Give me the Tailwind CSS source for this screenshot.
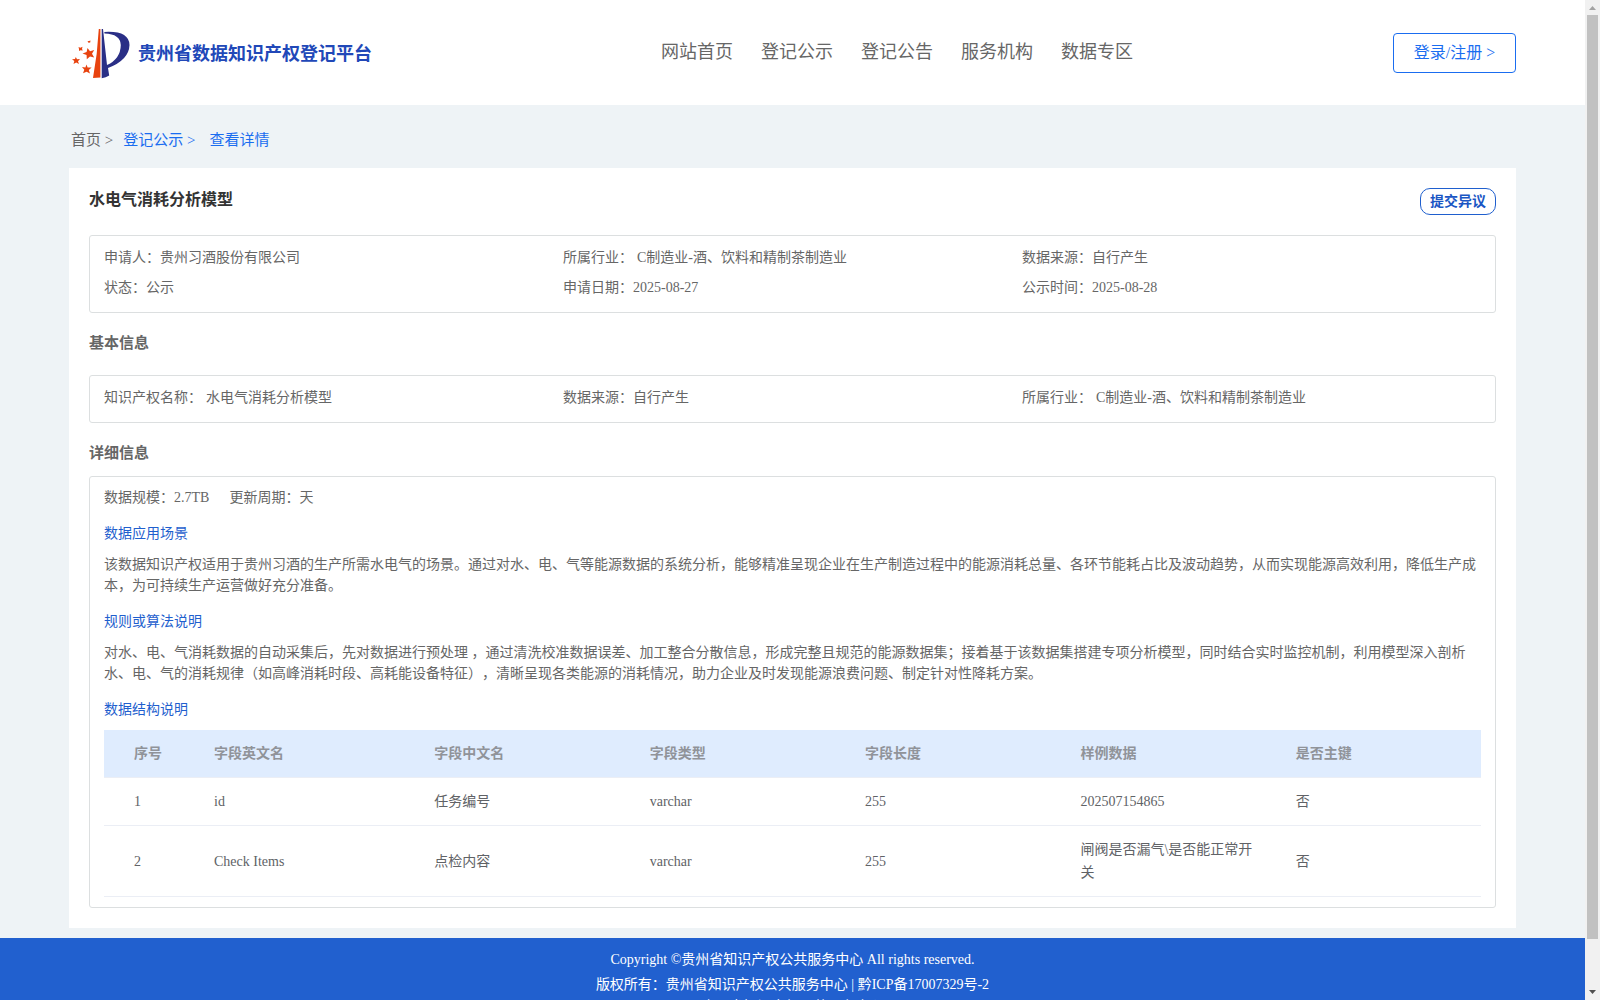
<!DOCTYPE html>
<html lang="zh-CN">
<head>
  <meta charset="UTF-8" />
  <meta name="viewport" content="width=device-width, initial-scale=1.0" />
  <title>贵州省数据知识产权登记平台</title>
  <script src="https://cdn.jsdelivr.net/npm/@tailwindcss/browser@4"></script>
  <style>
    body {
      font-family: "Liberation Serif", "Noto Sans CJK SC", serif;
      text-spacing-trim: space-all;
    }
  </style>
</head>
<body class="flex h-screen overflow-hidden bg-[#eef3f6] text-sm text-[#666]">
  <div class="flex-1 min-w-0 h-full overflow-hidden">
    <!-- Header -->
    <header class="bg-white h-[105px] px-[69px] flex items-center justify-between">
      <a href="#" class="w-[332px] flex items-center gap-2 pl-[3px] pt-[2px]">
        <svg class="w-[58px] h-[50px] shrink-0" viewBox="0 0 58 50" aria-hidden="true">
          <path fill="#e8430f" d="M26.800 0 L28.400 0 L28.400 48.500 Q24.500 48.500 21 49 Q25.500 25 26.800 0Z" />
          <path fill="#2a2f86" d="M29.700 0 L31 0 L35 36 Q48.500 30 48.800 16 Q48.500 5 32.500 4.500 L32.300 3 Q57 1.500 57.500 16 Q57 31 36 39 L37.200 46.500 Q34 48.500 29.700 49.300Z" />
          <g fill="#e8430f">
            <path d="M15.500 19 L18 22.300 L22.200 21 L20 24.700 L22.200 28.400 L18 27.400 L14.800 30.300 L14.600 26 L10.500 24.600 L14.600 22.900Z" />
            <path d="M3.800 28 L5 30.300 L8 30 L6 32.200 L7 35 L4.200 33.600 L1.500 35 L2.300 32 L0 30.200 L3 30Z" />
            <path d="M14.500 35.500 L15.600 38.600 L19.600 38.600 L16.800 41 L18 44.500 L14.600 42.800 L11 44.200 L12.300 40.800 L10 38 L13.400 38.400Z" />
            <path d="M6.500 18 L8.400 18.800 L10.500 17.800 L10 20 L10.800 21.500 L8.500 21.200 L7 22 L7 20Z" />
            <path d="M15.500 12.200 L17 12 L18.500 11.600 L18.200 13.400 L16.500 13.800Z" />
          </g>
        </svg>
        <span class="text-lg leading-6 font-bold text-[#2148b8] whitespace-nowrap">贵州省数据知识产权登记平台</span>
      </a>
      <nav class="flex gap-7 pb-[2px] text-lg leading-6 whitespace-nowrap">
        <a href="#">网站首页</a>
        <a href="#">登记公示</a>
        <a href="#">登记公告</a>
        <a href="#">服务机构</a>
        <a href="#">数据专区</a>
      </nav>
      <button type="button" class="w-[123px] h-10 border border-[#1a6df0] rounded text-base leading-6 text-[#1a6df0]">登录/注册 &gt;</button>
    </header>

    <main class="px-[69px]">
      <!-- Breadcrumb -->
      <nav class="h-[63px] pl-[2px] pt-[6px] flex items-center text-[15px] leading-6 text-[#1a6df0]">
        <a href="#" class="text-[#666] mr-[10px]">首页 &gt;</a>
        <a href="#" class="mr-[14px]">登记公示 &gt;</a>
        <span>查看详情</span>
      </nav>

      <article class="bg-white p-5">
        <div class="flex justify-between items-start">
          <h1 class="text-base leading-6 font-bold text-[#333]">水电气消耗分析模型</h1>
          <button type="button" class="w-[76px] h-[27px] border border-[#1f5fce] rounded-[10px] leading-6 font-bold text-[#1a56c4]">提交异议</button>
        </div>

        <dl class="mt-5 border border-[#dcdfe0] rounded-[3px] px-[14px] pt-[7px] pb-[9px] grid grid-cols-3 leading-[30px]">
          <div class="flex"><dt>申请人：</dt><dd>贵州习酒股份有限公司</dd></div>
          <div class="flex gap-1"><dt>所属行业：</dt><dd>C制造业-酒、饮料和精制茶制造业</dd></div>
          <div class="flex"><dt>数据来源：</dt><dd>自行产生</dd></div>
          <div class="flex"><dt>状态：</dt><dd>公示</dd></div>
          <div class="flex"><dt>申请日期：</dt><dd>2025-08-27</dd></div>
          <div class="flex"><dt>公示时间：</dt><dd>2025-08-28</dd></div>
        </dl>

        <h2 class="mt-5 text-[15px] leading-5 font-bold">基本信息</h2>
        <dl class="mt-[22px] border border-[#dcdfe0] rounded-[3px] px-[14px] pt-[7px] pb-[9px] grid grid-cols-3 leading-[30px]">
          <div class="flex gap-1"><dt>知识产权名称：</dt><dd>水电气消耗分析模型</dd></div>
          <div class="flex"><dt>数据来源：</dt><dd>自行产生</dd></div>
          <div class="flex gap-1"><dt>所属行业：</dt><dd>C制造业-酒、饮料和精制茶制造业</dd></div>
        </dl>

        <h2 class="mt-5 text-[15px] leading-5 font-bold">详细信息</h2>
        <section class="mt-[13px] border border-[#dcdfe0] rounded-[3px] px-[14px] py-[10px] leading-[21px]">
          <p class="flex gap-5"><span>数据规模：2.7TB</span><span>更新周期：天</span></p>
          <h3 class="mt-[15px] text-[#1f5fce]">数据应用场景</h3>
          <p class="mt-[10px]">该数据知识产权适用于贵州习酒的生产所需水电气的场景。通过对水、电、气等能源数据的系统分析，能够精准呈现企业在生产制造过程中的能源消耗总量、各环节能耗占比及波动趋势，从而实现能源高效利用，降低生产成本，为可持续生产运营做好充分准备。</p>
          <h3 class="mt-[15px] text-[#1f5fce]">规则或算法说明</h3>
          <p class="mt-[10px]">对水、电、气消耗数据的自动采集后，先对数据进行预处理 ，通过清洗校准数据误差、加工整合分散信息，形成完整且规范的能源数据集；接着基于该数据集搭建专项分析模型，同时结合实时监控机制，利用模型深入剖析水、电、气的消耗规律（如高峰消耗时段、高耗能设备特征），清晰呈现各类能源的消耗情况，助力企业及时发现能源浪费问题、制定针对性降耗方案。</p>
          <h3 class="mt-[15px] text-[#1f5fce]">数据结构说明</h3>
          <table class="mt-[10px] w-full table-fixed text-left leading-[23px] text-[#606266]">
            <colgroup>
              <col class="w-[90px]" />
              <col class="w-[16%]" />
              <col class="w-[15.64%]" />
              <col class="w-[15.64%]" />
              <col class="w-[15.64%]" />
              <col class="w-[15.64%]" />
              <col />
            </colgroup>
            <thead class="bg-[#dfecfe] text-[#909399]">
              <tr class="border-b border-[#ebeef5]">
                <th class="py-3 pl-[30px]">序号</th>
                <th class="py-3 px-5">字段英文名</th>
                <th class="py-3 px-5">字段中文名</th>
                <th class="py-3 px-5">字段类型</th>
                <th class="py-3 px-5">字段长度</th>
                <th class="py-3 px-5">样例数据</th>
                <th class="py-3 px-5">是否主键</th>
              </tr>
            </thead>
            <tbody>
              <tr class="border-b border-[#ebeef5]">
                <td class="py-3 pl-[30px]">1</td>
                <td class="py-3 px-5">id</td>
                <td class="py-3 px-5">任务编号</td>
                <td class="py-3 px-5">varchar</td>
                <td class="py-3 px-5">255</td>
                <td class="py-3 px-5">202507154865</td>
                <td class="py-3 px-5">否</td>
              </tr>
              <tr class="border-b border-[#ebeef5]">
                <td class="py-3 pl-[30px]">2</td>
                <td class="py-3 px-5">Check Items</td>
                <td class="py-3 px-5">点检内容</td>
                <td class="py-3 px-5">varchar</td>
                <td class="py-3 px-5">255</td>
                <td class="py-3 px-5">闸阀是否漏气\是否能正常开关</td>
                <td class="py-3 px-5">否</td>
              </tr>
            </tbody>
          </table>
        </section>
      </article>
    </main>

    <!-- Footer -->
    <footer class="mt-[10px] pt-[9px] pb-5 bg-[#2160cf] text-white text-center leading-[25px]">
      <p>Copyright ©贵州省知识产权公共服务中心 All rights reserved.</p>
      <p>版权所有：贵州省知识产权公共服务中心 | 黔ICP备17007329号-2</p>
      <p class="leading-5">贵州省知识产权公共服务中心</p>
    </footer>
  </div>

  <!-- Scrollbar -->
  <div class="w-[15px] h-full shrink-0 bg-[#f1f1f1] flex flex-col items-center" aria-hidden="true">
    <svg class="w-[15px] h-[15px]" viewBox="0 0 15 15"><path fill="#a3a3a3" d="M4 10h7L7.500 6z" /></svg>
    <div class="w-[11px] h-[924px] bg-[#c1c1c1]"></div>
    <svg class="w-[15px] h-[15px] mt-auto" viewBox="0 0 15 15"><path fill="#505050" d="M4 5h7L7.500 9z" /></svg>
  </div>
</body>
</html>
